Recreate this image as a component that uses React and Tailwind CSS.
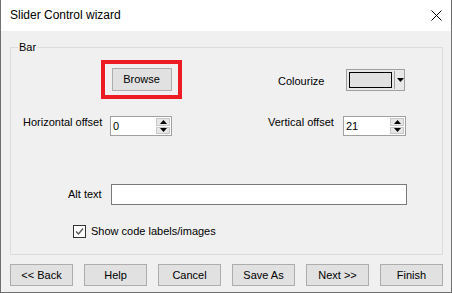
import React from "react";

const font = { fontFamily: '"Liberation Sans", Arial, sans-serif' };

function WinButton({ children, className = "" }) {
  return (
    <div
      className={`flex items-center justify-center border border-[#adadad] bg-[#e1e1e1] text-[11px] leading-[13px] text-black ${className}`}
    >
      {children}
    </div>
  );
}

function Arrow({ up }) {
  return (
    <svg width="7" height="4" viewBox="0 0 7 4" className="block">
      {up ? <path d="M3.5 0 L7 4 L0 4 Z" fill="#000" /> : <path d="M0 0 L7 0 L3.5 4 Z" fill="#000" />}
    </svg>
  );
}

function SpinBox({ value, className = "" }) {
  return (
    <div className={`flex h-[20px] border border-[#a0a0a0] bg-white ${className}`}>
      <div className="flex-1 pl-[2px] pt-[2px] text-[11px] leading-[14px] text-black">{value}</div>
      <div className="flex w-[15px] flex-col gap-[1px] py-[1px] pr-[1px]">
        <div className="flex flex-1 items-center justify-center border border-[#c8c8c8] bg-[#e6e6e6]">
          <Arrow up />
        </div>
        <div className="flex flex-1 items-center justify-center border border-[#c8c8c8] bg-[#e6e6e6]">
          <Arrow />
        </div>
      </div>
    </div>
  );
}

export default function App() {
  return (
    <div
      className="flex h-[293px] w-[452px] flex-col border-x border-b border-[#707070] bg-[#f0f0f0] text-black"
      style={font}
    >
      {/* Title bar */}
      <div className="flex h-[31px] shrink-0 items-center justify-between bg-white pl-[9px] pr-[9px]">
        <span className="text-[12px] leading-[15px]">Slider Control wizard</span>
        <svg width="11" height="11" viewBox="0 0 11 11" className="block">
          <path d="M0.5 0.5 L10.5 10.5 M10.5 0.5 L0.5 10.5" stroke="#000" strokeWidth="1" />
        </svg>
      </div>

      <div className="pl-[9px] pr-[8px]">
        {/* Group box */}
        <div className="relative mt-[16px] h-[208px] border border-[#dcdcdc]">
          <span className="absolute left-[7px] top-[-7px] bg-[#f0f0f0] px-[1px] text-[11px] leading-[13px]">
            Bar
          </span>

          {/* Browse / Colourize */}
          <div className="mt-[12px] flex h-[39px] items-center">
            <div className="ml-[90px] flex h-[39px] w-[81px] items-center justify-center border-[4px] border-[#ed1c24]">
              <WinButton className="h-[23px] w-[60px]">Browse</WinButton>
            </div>
            <span className="ml-[96px] w-[68px] pt-[3px] text-[11px] leading-[13px]">Colourize</span>
            <div className="flex h-[22px] w-[59px] items-center border border-[#a0a0a0] bg-[#e8e8e8] pl-[2px]">
              <div className="h-[16px] w-[43px] border border-black bg-[#e1e1e1]" />
              <div className="ml-[2px] h-[18px] w-px bg-[#a0a0a0]" />
              <div className="ml-[2px] flex items-center">
                <Arrow />
              </div>
            </div>
          </div>

          {/* Offsets */}
          <div className="mt-[17px] flex items-start">
            <span className="ml-[12px] w-[87px] text-[11px] leading-[13px]">Horizontal offset</span>
            <SpinBox value="0" className="w-[62px]" />
            <span className="ml-[96px] w-[75px] text-[11px] leading-[13px]">Vertical offset</span>
            <SpinBox value="21" className="w-[63px]" />
          </div>

          {/* Alt text */}
          <div className="mt-[48px] flex items-center">
            <span className="ml-[57px] w-[43px] text-[11px] leading-[13px]">Alt text</span>
            <div className="h-[21px] w-[296px] border border-[#7a7a7a] bg-white" />
          </div>

          {/* Checkbox */}
          <div className="mt-[20px] flex items-center">
            <div className="ml-[62px] flex h-[13px] w-[13px] items-center justify-center border border-[#333] bg-white">
              <svg width="9" height="9" viewBox="0 0 9 9" className="block">
                <path d="M1 4.5 L3.5 7 L8 1.5" stroke="#555" strokeWidth="1.3" fill="none" />
              </svg>
            </div>
            <span className="ml-[5px] text-[11px] leading-[13px]">Show code labels/images</span>
          </div>
        </div>

        {/* Bottom buttons */}
        <div className="mt-[9px] flex gap-[11px]">
          <WinButton className="h-[22px] w-[63px]">&lt;&lt; Back</WinButton>
          <WinButton className="h-[22px] w-[63px]">Help</WinButton>
          <WinButton className="h-[22px] w-[63px]">Cancel</WinButton>
          <WinButton className="h-[22px] w-[63px]">Save As</WinButton>
          <WinButton className="h-[22px] w-[63px]">Next &gt;&gt;</WinButton>
          <WinButton className="h-[22px] w-[63px]">Finish</WinButton>
        </div>
      </div>
    </div>
  );
}
